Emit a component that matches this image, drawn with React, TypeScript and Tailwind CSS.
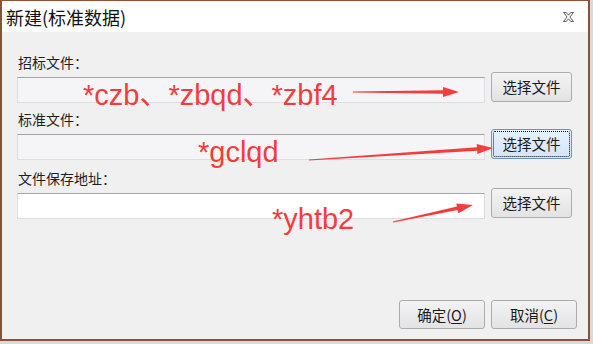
import type { ReactNode } from 'react'

const UI_FONT = "font-['Noto_Sans_CJK_SC','Noto_Sans',sans-serif]"
const MARK_FONT = "font-['Liberation_Sans','Noto_Sans_CJK_SC',sans-serif]"

type Pt = [number, number]

// tapering red arrow, like the ones a screenshot tool draws
function arrowPoints(from: Pt, to: Pt) {
  const [x1, y1] = from
  const [x2, y2] = to
  const len = Math.hypot(x2 - x1, y2 - y1)
  const dx = (x2 - x1) / len
  const dy = (y2 - y1) / len
  const nx = -dy
  const ny = dx
  const headLen = 16
  const headW = 5
  const bx = x2 - dx * headLen
  const by = y2 - dy * headLen
  const pts: Pt[] = [
    [x1 + nx * 0.6, y1 + ny * 0.6],
    [bx + nx * 1.8, by + ny * 1.8],
    [bx + nx * headW, by + ny * headW],
    [x2, y2],
    [bx - nx * headW, by - ny * headW],
    [bx - nx * 1.8, by - ny * 1.8],
    [x1 - nx * 0.6, y1 - ny * 0.6],
  ]
  return pts.map(([x, y]) => `${x.toFixed(1)},${y.toFixed(1)}`).join(' ')
}

const ARROWS: { from: Pt; to: Pt }[] = [
  { from: [353, 92], to: [459, 92] },
  { from: [309, 160], to: [493, 148] },
  { from: [393, 222], to: [473, 205] },
]

function WinButton({ children, focused }: { children: ReactNode; focused?: boolean }) {
  return (
    <button
      className={
        focused
          ? 'relative flex h-[30px] w-[81px] items-center justify-center rounded-[3px] border border-[#6f93c2] bg-gradient-to-b from-[#e9f2fd] to-[#d3e4f8] text-[14.5px] text-[#1a1a1a]'
          : 'relative flex h-[30px] w-[81px] items-center justify-center rounded-[3px] border border-[#acacac] bg-gradient-to-b from-[#f3f3f3] to-[#e3e3e6] text-[14.5px] text-[#1a1a1a]'
      }
    >
      {focused && <span className="absolute inset-[1px] rounded-[2px] border border-dotted border-[#111]" />}
      {children}
    </button>
  )
}

function FileRow({ label, readOnly, focused }: { label: string; readOnly?: boolean; focused?: boolean }) {
  return (
    <div className="flex flex-col">
      <div className="h-[20px] pl-[1px] text-[14px] leading-[20px] text-[#1e1e1e]">{label}</div>
      <div className="flex items-start gap-[6px]">
        <div
          className={
            readOnly
              ? 'mt-[5px] h-[26px] flex-1 border border-[#dcdde3] border-t-[#a3a4ab] bg-[#f5f5f7]'
              : 'mt-[5px] h-[26px] flex-1 border border-[#dcdde3] border-t-[#a3a4ab] bg-white'
          }
        />
        <WinButton focused={focused}>选择文件</WinButton>
      </div>
    </div>
  )
}

export default function App() {
  return (
    <div className={`h-[344px] w-[593px] bg-[#dadada] ${UI_FONT}`}>
      <div className="relative flex h-[341px] w-[590px] flex-col border-x-2 border-t border-b-2 border-[#8c5235]">
        <div className="flex h-[31px] items-center justify-between bg-white pl-[4px] pr-[14px]">
          <span className="text-[18px] leading-none text-[#111]">新建(标准数据)</span>
          <svg width="11" height="10" viewBox="0 0 12 11">
            <polygon
              points="0.5,0.5 3.5,0.5 6,3.5 8.5,0.5 11.5,0.5 7.6,5.5 11.5,10.5 8.5,10.5 6,7.5 3.5,10.5 0.5,10.5 4.4,5.5"
              fill="#fff"
              stroke="#4d4d4d"
              strokeWidth="1"
            />
          </svg>
        </div>

        <div className="flex flex-1 flex-col bg-[#f0f0f0] pl-[15px] pr-[16px] pt-[20px]">
          <FileRow label="招标文件：" readOnly />
          <div className="mt-[6px]">
            <FileRow label="标准文件：" readOnly focused />
          </div>
          <div className="mt-[8px]">
            <FileRow label="文件保存地址：" />
          </div>

          <div className="mt-auto -mr-[5px] mb-[10px] flex justify-end gap-[6px]">
            <button className="h-[29px] w-[86px] rounded-[3px] border border-[#acacac] bg-gradient-to-b from-[#f3f3f3] to-[#e3e3e6] text-[14.5px] text-[#1a1a1a]">
              确定(<span className="underline underline-offset-2">O</span>)
            </button>
            <button className="h-[29px] w-[86px] rounded-[3px] border border-[#acacac] bg-gradient-to-b from-[#f3f3f3] to-[#e3e3e6] text-[14.5px] text-[#1a1a1a]">
              取消(<span className="underline underline-offset-2">C</span>)
            </button>
          </div>
        </div>

        {/* red annotations drawn over the dialog */}
        <span className={`absolute left-[81px] top-[76px] text-[29px] leading-[36px] text-[#f43c3c] ${MARK_FONT}`}>
          *czb、*zbqd、*zbf4
        </span>
        <span className={`absolute left-[196px] top-[133px] text-[29px] leading-[36px] text-[#f43c3c] ${MARK_FONT}`}>
          *gclqd
        </span>
        <span className={`absolute left-[270px] top-[200px] text-[29px] leading-[36px] text-[#f43c3c] ${MARK_FONT}`}>
          *yhtb2
        </span>
        <svg className="pointer-events-none absolute -left-[2px] -top-[1px]" width="593" height="344">
          {ARROWS.map((a, i) => (
            <polygon key={i} points={arrowPoints(a.from, a.to)} fill="#f43c3c" />
          ))}
        </svg>
      </div>
    </div>
  )
}
